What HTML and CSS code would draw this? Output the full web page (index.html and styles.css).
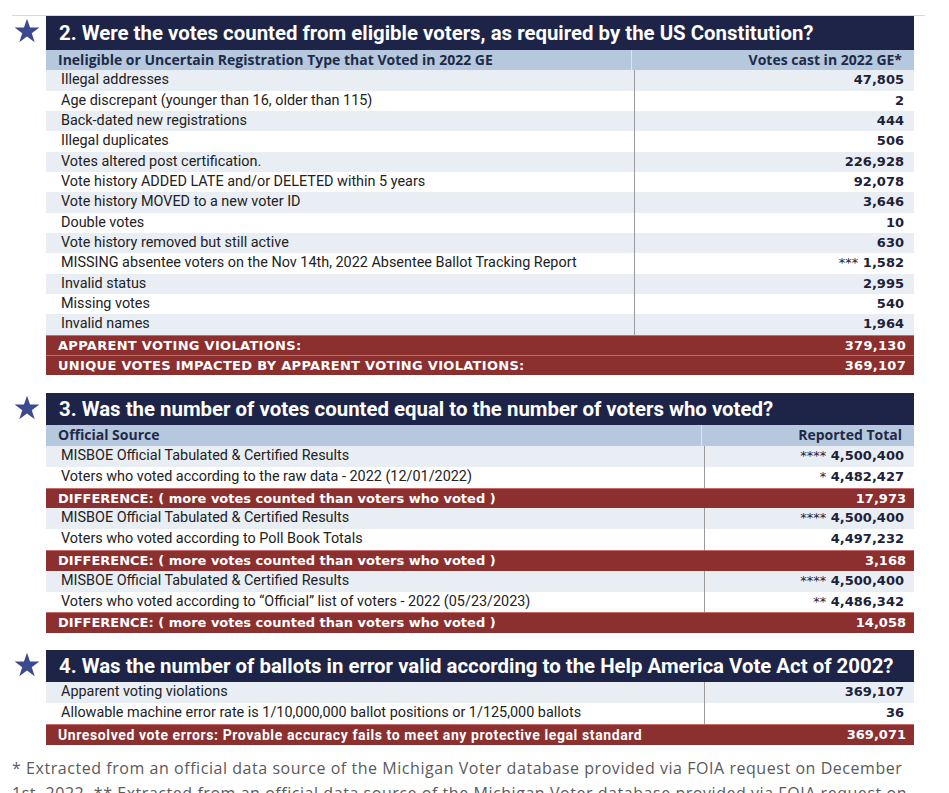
FILE: index.html
```html
<!DOCTYPE html>
<html>
<head>
<meta charset="utf-8">
<link rel="stylesheet" href="styles.css">
</head>
<body>
<div class="page">
  <div class="topline"></div>

  <section class="sec s2">
    <svg class="star" viewBox="0 0 24 24"><path d="M12 1.5l2.6 7.6h8l-6.5 4.8 2.5 7.7L12 16.8l-6.6 4.8 2.5-7.7L1.4 9.1h8z"/></svg>
    <div class="tbl">
      <div class="head big">2. Were the votes counted from eligible voters, as required by the US Constitution?</div>
      <div class="row colhead"><div class="c1">Ineligible or Uncertain Registration Type that Voted in 2022 GE</div><div class="c2">Votes cast in 2022 GE*</div></div>
      <div class="row alt"><div class="c1">Illegal addresses</div><div class="c2">47,805</div></div>
      <div class="row"><div class="c1">Age discrepant (younger than 16, older than 115)</div><div class="c2">2</div></div>
      <div class="row alt"><div class="c1">Back-dated new registrations</div><div class="c2">444</div></div>
      <div class="row"><div class="c1">Illegal duplicates</div><div class="c2">506</div></div>
      <div class="row alt"><div class="c1">Votes altered post certification.</div><div class="c2">226,928</div></div>
      <div class="row"><div class="c1">Vote history ADDED LATE and/or DELETED within 5 years</div><div class="c2">92,078</div></div>
      <div class="row alt"><div class="c1">Vote history MOVED to a new voter ID</div><div class="c2">3,646</div></div>
      <div class="row"><div class="c1">Double votes</div><div class="c2">10</div></div>
      <div class="row alt"><div class="c1">Vote history removed but still active</div><div class="c2">630</div></div>
      <div class="row"><div class="c1">MISSING absentee voters on the Nov 14th, 2022 Absentee Ballot Tracking Report</div><div class="c2"><span class="ast">***</span> 1,582</div></div>
      <div class="row alt"><div class="c1">Invalid status</div><div class="c2">2,995</div></div>
      <div class="row"><div class="c1">Missing votes</div><div class="c2">540</div></div>
      <div class="row alt"><div class="c1">Invalid names</div><div class="c2">1,964</div></div>
      <div class="row red caps"><div class="c1">APPARENT VOTING VIOLATIONS:</div><div class="c2">379,130</div></div>
      <div class="row red caps"><div class="c1">UNIQUE VOTES IMPACTED BY APPARENT VOTING VIOLATIONS:</div><div class="c2">369,107</div></div>
    </div>
  </section>

  <section class="sec s3">
    <svg class="star" viewBox="0 0 24 24"><path d="M12 1.5l2.6 7.6h8l-6.5 4.8 2.5 7.7L12 16.8l-6.6 4.8 2.5-7.7L1.4 9.1h8z"/></svg>
    <div class="tbl">
      <div class="head">3. Was the number of votes counted equal to the number of voters who voted?</div>
      <div class="row colhead"><div class="c1">Official Source</div><div class="c2">Reported Total</div></div>
      <div class="row alt"><div class="c1">MISBOE Official Tabulated &amp; Certified Results</div><div class="c2"><span class="ast">****</span> 4,500,400</div></div>
      <div class="row"><div class="c1">Voters who voted according to the raw data - 2022 (12/01/2022)</div><div class="c2"><span class="ast">*</span> 4,482,427</div></div>
      <div class="row red"><div class="c1">DIFFERENCE: ( more votes counted than voters who voted )</div><div class="c2">17,973</div></div>
      <div class="row alt"><div class="c1">MISBOE Official Tabulated &amp; Certified Results</div><div class="c2"><span class="ast">****</span> 4,500,400</div></div>
      <div class="row"><div class="c1">Voters who voted according to Poll Book Totals</div><div class="c2">4,497,232</div></div>
      <div class="row red"><div class="c1">DIFFERENCE: ( more votes counted than voters who voted )</div><div class="c2">3,168</div></div>
      <div class="row alt"><div class="c1">MISBOE Official Tabulated &amp; Certified Results</div><div class="c2"><span class="ast">****</span> 4,500,400</div></div>
      <div class="row"><div class="c1">Voters who voted according to “Official” list of voters - 2022 (05/23/2023)</div><div class="c2"><span class="ast">**</span> 4,486,342</div></div>
      <div class="row red"><div class="c1">DIFFERENCE: ( more votes counted than voters who voted )</div><div class="c2">14,058</div></div>
    </div>
  </section>

  <section class="sec s4">
    <svg class="star" viewBox="0 0 24 24"><path d="M12 1.5l2.6 7.6h8l-6.5 4.8 2.5 7.7L12 16.8l-6.6 4.8 2.5-7.7L1.4 9.1h8z"/></svg>
    <div class="tbl">
      <div class="head">4. Was the number of ballots in error valid according to the Help America Vote Act of 2002?</div>
      <div class="row alt"><div class="c1">Apparent voting violations</div><div class="c2">369,107</div></div>
      <div class="row"><div class="c1">Allowable machine error rate is 1/10,000,000 ballot positions or 1/125,000 ballots</div><div class="c2">36</div></div>
      <div class="row red"><div class="c1 lower">Unresolved vote errors: Provable accuracy fails to meet any protective legal standard</div><div class="c2">369,071</div></div>
    </div>
  </section>

  <p class="note">* Extracted from an official data source of the Michigan Voter database provided via FOIA request on December 1st, 2022. ** Extracted from an official data source of the Michigan Voter database provided via FOIA request on May 23rd, 2023.</p>
</div>
</body>
</html>
```

FILE: styles.css
```css
html, body {
  margin: 0;
  padding: 0;
  background: #ffffff;
}
.page {
  padding: 15px 0 0 12px;
  width: 913px;
  overflow: hidden;
}
.topline {
  width: 913px;
  height: 1px;
  background: #d8d8d8;
}
.sec {
  display: flex;
  align-items: flex-start;
}
.s3 { margin-top: 18px; }
.s4 { margin-top: 17px; }
.star {
  width: 28px;
  height: 28px;
  margin: 1px 5px 0 1px;
  fill: #3b4a8e;
  flex: none;
}
.tbl {
  width: 868px;
  display: flex;
  flex-direction: column;
  font-family: Roboto, "Liberation Sans", sans-serif;
}
.head {
  background: #1e2447;
  color: #ffffff;
  font-weight: bold;
  font-size: 20.4px;
  height: 32px;
  line-height: 32px;
  padding-left: 13px;
  white-space: nowrap;
}
.head.big {
  height: 34px;
  line-height: 35px;
}
.row {
  display: flex;
  height: 20.8px;
  line-height: 20.8px;
  font-size: 14.4px;
  color: #222;
  background: #ffffff;
  white-space: nowrap;
}
.s2 .row {
  height: 20.33px;
  line-height: 20.33px;
}
.row.alt { background: #e9eef4; }
.c1 {
  padding-left: 15px;
  border-right: 1px solid #9a9a9a;
}
.s2 .c1 { width: 573px; }
.s3 .c1, .s4 .c1 { width: 643px; }
.c2 {
  flex: 1;
  text-align: right;
  padding-right: 10px;
  font-family: "DejaVu Sans", sans-serif;
  font-weight: bold;
  font-size: 13px;
  color: #1e2238;
}
.ast { font-weight: normal; }
.colhead {
  background: #b6c8dd;
  font-family: "Open Sans", sans-serif;
  font-weight: bold;
  color: #1e2a48;
  font-size: 14px;
}
.colhead .c1 {
  padding-left: 12px;
  border-right: 1px solid #dde6f0;
}
.colhead .c2 {
  font-family: "Open Sans", sans-serif;
  font-size: 14px;
  padding-right: 12px;
  color: #1e2a48;
}
.row.red {
  background: #8b2f2f;
  color: #ffffff;
  font-family: "DejaVu Sans", sans-serif;
  font-weight: bold;
  font-size: 13px;
  border-top: 1px solid #c46c6c;
  box-sizing: border-box;
}
.row.red .c1 {
  padding-left: 12px;
  border-right: none;
}
.row.red .c1.lower {
  font-family: Roboto, "Liberation Sans", sans-serif;
  font-size: 14px;
  letter-spacing: 0.6px;
}
.row.red .c2 {
  color: #ffffff;
  padding-right: 8px;
}
.row.caps { letter-spacing: 0.3px; }
.note {
  margin: 11px 0 0 0;
  font-family: "Open Sans", sans-serif;
  font-size: 16px;
  letter-spacing: 0.55px;
  line-height: 25px;
  color: #5a5a5a;
  width: 905px;
}
```
